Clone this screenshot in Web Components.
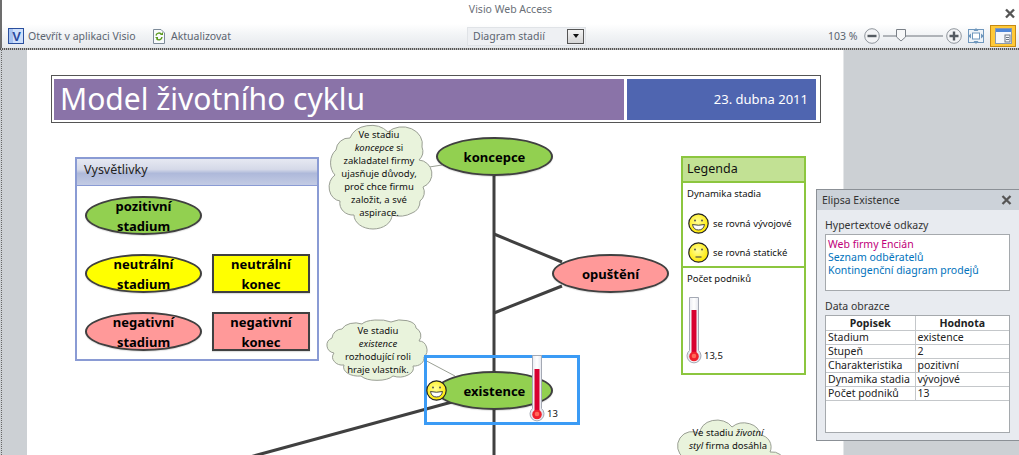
<!DOCTYPE html>
<html lang="cs"><head><meta charset="utf-8"><title>Visio Web Access</title>
<style>
html,body{margin:0;padding:0;width:1019px;height:455px;overflow:hidden;background:#fff;font-family:"Noto Sans","Open Sans",sans-serif}
</style></head><body>
<vw-app></vw-app>
<script>
const FONT='"Noto Sans","Open Sans","DejaVu Sans",sans-serif';
function def(name,html,setup){
  customElements.define(name,class extends HTMLElement{
    constructor(){super();const r=this.attachShadow({mode:'open'});r.innerHTML=typeof html==='function'?html(this):html;}
  });
}
function attrHtml(fn){return el=>fn(a=>el.getAttribute(a)||'');}

def('vw-app',`<style>:host{display:flex;flex-direction:column;width:1019px;height:455px;overflow:hidden;font-family:${FONT}}</style>
<vw-titlebar></vw-titlebar><vw-toolbar></vw-toolbar><vw-stage></vw-stage>`);

def('vw-titlebar',`<style>
:host{display:flex;height:24px;position:relative;align-items:flex-start;justify-content:center;border-left:2px solid #6d6d6d;box-sizing:border-box;background:#fff;color:#6a6f78;font-size:10.5px;line-height:19px}
svg{position:absolute;right:3px;top:8px}
</style><span>Visio Web Access</span>
<svg width="12" height="11" viewBox="0 0 12 11"><path d="M2 1.5 10 9.5M10 1.5 2 9.5" stroke="#555" stroke-width="2.4"/></svg>`);

def('vw-toolbar',`<style>
:host{display:flex;height:24px;box-sizing:border-box;align-items:center;border-left:2px solid #6d6d6d;padding-left:6px;background:linear-gradient(#fff 0,#f2f4f6 45%,#e6e9ed 100%);color:#5b6470;font-size:10.5px;position:relative}
.i{display:flex;align-items:center}
svg{display:block;flex:none}
.open{gap:4px;width:145px}
.ref{gap:6px;width:314px}
.sel{box-sizing:border-box;width:119px;height:19px;background:#eef0f3;border:1px solid #e0e3e7;display:flex;align-items:center;padding-left:5px;gap:0;justify-content:space-between;padding-right:1px}
.drop{width:17px;height:15px;border:1px solid #555;box-sizing:border-box;background:linear-gradient(#f4f4f4,#d5d5d5);display:flex;align-items:center;justify-content:center}
.drop i{border:3.5px solid transparent;border-top:4px solid #111;border-bottom:0;display:block}
.zoom{margin-left:242px;gap:0}
.pct{width:36px}
.panelbtn{box-sizing:border-box;width:26px;height:22px;background:#ffc937;border:1px solid #c58a14;display:flex;align-items:center;justify-content:center;margin-left:6px}
</style>
<div class="i open"><svg width="16" height="16" viewBox="0 0 16 16"><rect x=".5" y=".5" width="15" height="15" fill="#cfe0fb" stroke="#2a4f9e"/><rect x="1" y="1" width="4" height="14" fill="#a8c4f2"/><text x="8.5" y="13" font-family="Liberation Sans" font-weight="700" font-size="13" text-anchor="middle" fill="#2a4aa0">V</text></svg><span>Otevřít v aplikaci Visio</span></div>
<div class="i ref"><svg width="12" height="16" viewBox="0 0 12 16"><path d="M.5 1.5H8L11.5 5V15.5H.5Z" fill="#f8fafc" stroke="#7c8a98"/><path d="M3 7.5A3 3 0 0 1 8.5 6.5M9 9A3 3 0 0 1 3.5 10.5" fill="none" stroke="#5b9a1e" stroke-width="1.4"/><path d="M7 7H10V4ZM2 9H5V12Z" fill="#5b9a1e"/></svg><span>Aktualizovat</span></div>
<div class="sel"><span>Diagram stadií</span><div class="drop"><i></i></div></div>
<div class="i zoom"><span class="pct">103 %</span>
<svg width="98" height="18" viewBox="0 0 98 18">
<circle cx="8" cy="9" r="7.3" fill="#f3f4f6" stroke="#8f959c" stroke-width="1"/><rect x="3.5" y="7.8" width="9" height="2.4" fill="#555b62"/>
<line x1="19" y1="9" x2="79" y2="9" stroke="#6f757c"/>
<path d="M32.5 2.5H41.5V10L37 14 32.5 10Z" fill="#f6f7f8" stroke="#7a8087"/>
<circle cx="90" cy="9" r="7.3" fill="#f3f4f6" stroke="#8f959c"/><path d="M85.5 9H94.5M90 4.5V13.500" stroke="#555b62" stroke-width="2.4"/>
</svg>
<svg style="margin-left:6px" width="16" height="16" viewBox="0 0 16 16"><rect x=".5" y="1.500" width="15" height="13" fill="#eef3f8" stroke="#6f97bd"/><rect x="4.500" y="5" width="7" height="6" fill="#fff" stroke="#6f97bd"/><path d="M8 0 10.500 3H5.500ZM8 16 5.500 13H10.500ZM0 8 3 5.500V10.500ZM16 8 13 10.500V5.500Z" fill="#6f97bd"/></svg>
<div class="panelbtn"><svg width="17" height="16" viewBox="0 0 17 16"><rect x=".5" y=".5" width="16" height="15" fill="#f4f7fb" stroke="#8a9ab0"/><rect x="1" y="1" width="15" height="3" fill="#4f86d8"/><rect x="10" y="7" width="5" height="7" fill="none" stroke="#6d7784"/><path d="M11 9.500H14M11 11.500H14" stroke="#6d7784"/></svg></div>
</div>`);

def('vw-stage',`<style>
:host{display:block;flex:1;position:relative;background:#ccd0d4;overflow:hidden}
.dots{height:2px;background:repeating-linear-gradient(90deg,#555 0 1px,#bbb 1px 2px)}
.side{position:absolute;left:1px;top:2px;bottom:0;width:1px;background:repeating-linear-gradient(#666 0 1px,#ccd0d4 1px 2px)}
.page{margin-left:27px;width:817px;height:405px;background:#fff;border-right:1px solid #e4e6e8;box-sizing:border-box;position:relative}
vw-panel{position:absolute;left:816px;top:141px}
</style>
<div class="dots"></div><div class="side"></div>
<div class="page"><vw-diagram></vw-diagram></div>
<vw-panel></vw-panel>`);

def('vw-diagram',`<style>
:host{display:block;position:absolute;left:-27px;top:-50px;width:1019px;height:455px}
svg.lines{position:absolute;left:0;top:0}
.a{position:absolute}
.sel{position:absolute;left:424px;top:355px;width:156px;height:70px;box-sizing:border-box;border:3px solid #3b9bf5}
</style>
<svg class="lines" width="1019" height="455">
<g stroke="#404040" stroke-width="3" fill="none">
<path d="M494 176V455"/><path d="M494 234 562 262M494 313 562 286"/><path d="M250 457 452 402"/>
</g>
<g stroke="#9a9f94" stroke-width="1"><path d="M423 168 442 165M421 358 455 376"/></g>
</svg>
<vw-titlebox class="a" style="left:51px;top:75px"></vw-titlebox>
<vw-explain class="a" style="left:75px;top:157px"></vw-explain>
<vw-legend class="a" style="left:681px;top:156px"></vw-legend>
<vw-cloud class="a" w="98" h="106" style="left:330px;top:123px" d="M20 15A22 18 0 0 1 58 9A20 17 0 0 1 92 24A12 12 0 0 1 89 37A14 14 0 0 1 93 64A11 11 0 0 1 90 78A11 12 0 0 1 82 90A20 14 0 0 1 62 92A19 14 0 0 1 24 92A13 12 0 0 1 10 78A12 14 0 0 1 5 52A11 15 0 0 1 6 27A13 13 0 0 1 20 15Z">Ve stadiu<br><i>koncepce</i> si<br>zakladatel firmy<br>ujasňuje důvody,<br>proč chce firmu<br>založit, a své<br>aspirace.</vw-cloud>
<vw-cloud class="a" w="98" h="64" style="left:329px;top:319px" d="M13 10A14 9 0 0 1 33 5A17 6 0 0 1 62 3A15 8 0 0 1 87 9A10 9 0 0 1 90 22A8 9 0 0 1 95 38A10 8 0 0 1 84 47A14 9 0 0 1 64 57A18 8 0 0 1 32 57A15 9 0 0 1 15 46A10 8 0 0 1 5 34A9 8 0 0 1 3 19A10 10 0 0 1 13 10Z">Ve stadiu<br><i>existence</i><br>rozhodující roli<br>hraje vlastník.</vw-cloud>
<vw-cloud class="a" w="96" h="60" style="left:680px;top:420px" d="M20 14A17 13 0 0 1 52 7A16 12 0 0 1 80 15A12 12 0 0 1 90 32A12 12 0 0 1 94 60H2A12 12 0 0 1 4 38A12 12 0 0 1 20 14Z"><span style="display:block;padding-top:1px">Ve stadiu <i>životní</i><br><i>styl</i> firma dosáhla</span></vw-cloud>
<vw-shape class="a" kind="ellipse" fill="#92d050" big style="left:436px;top:137px">koncepce</vw-shape>
<vw-shape class="a" kind="ellipse" fill="#ff9999" big style="left:552px;top:254px">opuštění</vw-shape>
<vw-shape class="a" kind="ellipse" fill="#92d050" big style="left:436px;top:371px">existence</vw-shape>
<div class="sel"></div>
<vw-smiley class="a" style="left:426px;top:380px" mood="happy"></vw-smiley>
<vw-thermo class="a" level="14" style="left:529px;top:355px"><span>13</span></vw-thermo>`);

def('vw-titlebox',`<style>
:host{display:flex;box-sizing:border-box;width:770px;height:48px;border:1px solid #555;padding:3px 4px 2px 2px;gap:3px;background:#fff;color:#fff}
.t{width:570px;background:#8a73a8;font-size:30px;line-height:40px;padding-left:6px;box-sizing:border-box}
.d{flex:1;background:#4f65b0;font-size:13px;line-height:40px;text-align:right;padding-right:8px}
</style><div class="t">Model životního cyklu</div><div class="d">23. dubna 2011</div>`);

def('vw-shape',el=>{
  const ell=el.getAttribute('kind')==='ellipse',w=ell?117:98,f=el.getAttribute('fill');
  return `<style>
:host{display:flex;position:relative;box-sizing:border-box;width:${w}px;height:39px;align-items:center;justify-content:center;text-align:center;font-weight:700;font-size:13px;line-height:20px;color:#000;background:${f};border:2px solid #404040;${ell?'border-radius:50%;':''}box-shadow:0 1px 1px rgba(0,0,0,.12)}
</style><span><slot></slot></span>`;
});

def('vw-explain',`<style>
:host{display:block;box-sizing:border-box;width:244px;height:204px;border:2px solid #8a9bd4;background:#fff}
.h{height:27px;box-sizing:border-box;padding-left:7px;font-size:12.5px;line-height:22px;color:#222;background:linear-gradient(#e6e9f2 0,#d5d9e8 40%,#aeb9da 55%,#c3cbe4 100%);border-bottom:1px solid #8a9bd4}
.g{display:grid;grid-template-columns:117px 98px;column-gap:10px;row-gap:19px;padding:10px 8px}
</style><div class="h">Vysvětlivky</div>
<div class="g">
<vw-shape kind="ellipse" fill="#92d050">pozitivní<br>stadium</vw-shape><div></div>
<vw-shape kind="ellipse" fill="#ffff00">neutrální<br>stadium</vw-shape><vw-shape kind="rect" fill="#ffff00">neutrální<br>konec</vw-shape>
<vw-shape kind="ellipse" fill="#ff9999">negativní<br>stadium</vw-shape><vw-shape kind="rect" fill="#ff9999">negativní<br>konec</vw-shape>
</div>`);

def('vw-legend',`<style>
:host{display:flex;flex-direction:column;box-sizing:border-box;width:125px;height:219px;border:2px solid #8cc63f;background:#fff;font-size:9.5px;color:#111}
.h{height:23px;background:#c2e194;border-bottom:2px solid #8cc63f;padding-left:4px;font-size:12.5px;line-height:22px;box-sizing:content-box}
.s1{height:85px;border-bottom:2px solid #8cc63f;padding:4px;box-sizing:border-box}
.s2{flex:1;padding:4px;position:relative}
.p{line-height:14px}
.r{display:flex;align-items:center;gap:4px;margin-left:1px;height:29px;white-space:nowrap}
.s1 .p{margin-bottom:8px}
vw-thermo{position:absolute;left:3px;top:29px}
</style>
<div class="h">Legenda</div>
<div class="s1"><div class="p">Dynamika stadia</div>
<div class="r"><vw-smiley mood="happy"></vw-smiley>se rovná vývojové</div>
<div class="r"><vw-smiley mood="flat"></vw-smiley>se rovná statické</div></div>
<div class="s2"><div class="p">Počet podniků</div><vw-thermo level="13"><span>13,5</span></vw-thermo></div>`);

def('vw-smiley',el=>{
 const happy=el.getAttribute('mood')==='happy';
 return `<style>:host{display:inline-block;width:21px;height:21px;flex:none}svg{display:block}</style>
<svg width="21" height="21" viewBox="0 0 21 21"><defs><radialGradient id="g" cx=".45" cy=".4" r=".6"><stop offset="0" stop-color="#ffff9a"/><stop offset="1" stop-color="#ffe800"/></radialGradient></defs>
<circle cx="10.500" cy="10.500" r="9.700" fill="url(#g)" stroke="#222" stroke-width="1.200"/>
<circle cx="7" cy="7.500" r="1" fill="#555"/><circle cx="14" cy="7.500" r="1" fill="#555"/>
${happy?'<path d="M4.500 11.500Q10.500 13 16.500 11.500Q15.500 17 10.500 17Q5.500 17 4.500 11.500Z" fill="#fff" stroke="#333" stroke-width=".9"/>':'<path d="M7.500 15H13.500" stroke="#444" stroke-width="1.100"/>'}
</svg>`;
});

def('vw-thermo',el=>{
 const top=+el.getAttribute('level');
 return `<style>:host{display:block;width:44px;height:68px;font-size:9.5px;color:#111}
svg{display:block}::slotted(span){position:absolute;left:18px;top:52px;line-height:14px}</style>
<svg width="16" height="68" viewBox="0 0 16 68"><defs><linearGradient id="t" x1="0" x2="1" y1="0" y2="0"><stop offset="0" stop-color="#dde0ea"/><stop offset=".5" stop-color="#fff"/><stop offset="1" stop-color="#d6dae6"/></linearGradient></defs>
<path d="M3.500 .5H12.500V53.500A7 7 0 1 1 3.500 53.500Z" fill="url(#t)" stroke="#a4a9b4"/>
<rect x="5.500" y="${top}" width="5" height="45" fill="#d8002f"/>
<circle cx="8" cy="59.500" r="4.800" fill="#f0202c"/><circle cx="8" cy="59" r="2.300" fill="#ff6a5a"/></svg><slot></slot>`;
});

def('vw-cloud',el=>{
 const w=el.getAttribute('w'),h=el.getAttribute('h'),d=el.getAttribute('d');
 return `<style>:host{display:block;width:${w}px;height:${h}px;position:absolute;font-size:9.5px;line-height:13px;color:#111;text-align:center}
svg{position:absolute;left:0;top:0;overflow:visible}.t{position:relative;padding-top:5px}</style>
<svg width="${w}" height="${h}"><path d="${d}" fill="#e9f3dc" stroke="#9a9f94"/></svg><div class="t"><slot></slot></div>`;
});

def('vw-panel',`<style>
:host{display:block;box-sizing:border-box;width:203px;height:252px;border:1px solid #8b9096;border-right:0;background:#e8ebf0;font-size:10.5px;color:#333;position:absolute}
.h{height:20px;background:#ccd2d9;padding-left:5px;line-height:19px;display:flex;justify-content:space-between;align-items:center}
.h svg{margin-right:7px}
.b{padding:0 9px 0 8px}
.l{line-height:13px;margin-top:9px;margin-bottom:2px}
.links{box-sizing:border-box;height:57px;border:1px solid #a5a9ad;background:#fff;padding:3px 2px;line-height:13px;color:#0072bc}
.links div:first-child{color:#c0007a}
.grid{box-sizing:border-box;height:118px;border:1px solid #a5a9ad;background:#fff;margin-top:1px}
.links + .l{margin-top:9px}
table{border-collapse:collapse;width:100%;table-layout:fixed;font-size:10.5px;line-height:12px;color:#222}
td,th{border:1px solid #c4c7ca;border-top:0;padding:0 2px;height:14px;box-sizing:border-box;white-space:nowrap;text-align:left;overflow:hidden}
th{text-align:center;font-weight:700;border-top:0}
td:first-child,th:first-child{border-left:0;width:89px}
td:last-child,th:last-child{border-right:0}
</style>
<div class="h"><span>Elipsa Existence</span><svg width="11" height="10" viewBox="0 0 11 10"><path d="M1.500 1 9.500 9M9.500 1 1.500 9" stroke="#555" stroke-width="2.300"/></svg></div>
<div class="b"><div class="l">Hypertextové odkazy</div>
<div class="links"><div>Web firmy Encián</div><div>Seznam odběratelů</div><div>Kontingenční diagram prodejů</div></div>
<div class="l">Data obrazce</div>
<div class="grid"><table><tr><th>Popisek</th><th>Hodnota</th></tr>
<tr><td>Stadium</td><td>existence</td></tr><tr><td>Stupeň</td><td>2</td></tr><tr><td>Charakteristika</td><td>pozitivní</td></tr><tr><td>Dynamika stadia</td><td>vývojové</td></tr><tr><td>Počet podniků</td><td>13</td></tr></table></div></div>`);
</script>
</body></html>
